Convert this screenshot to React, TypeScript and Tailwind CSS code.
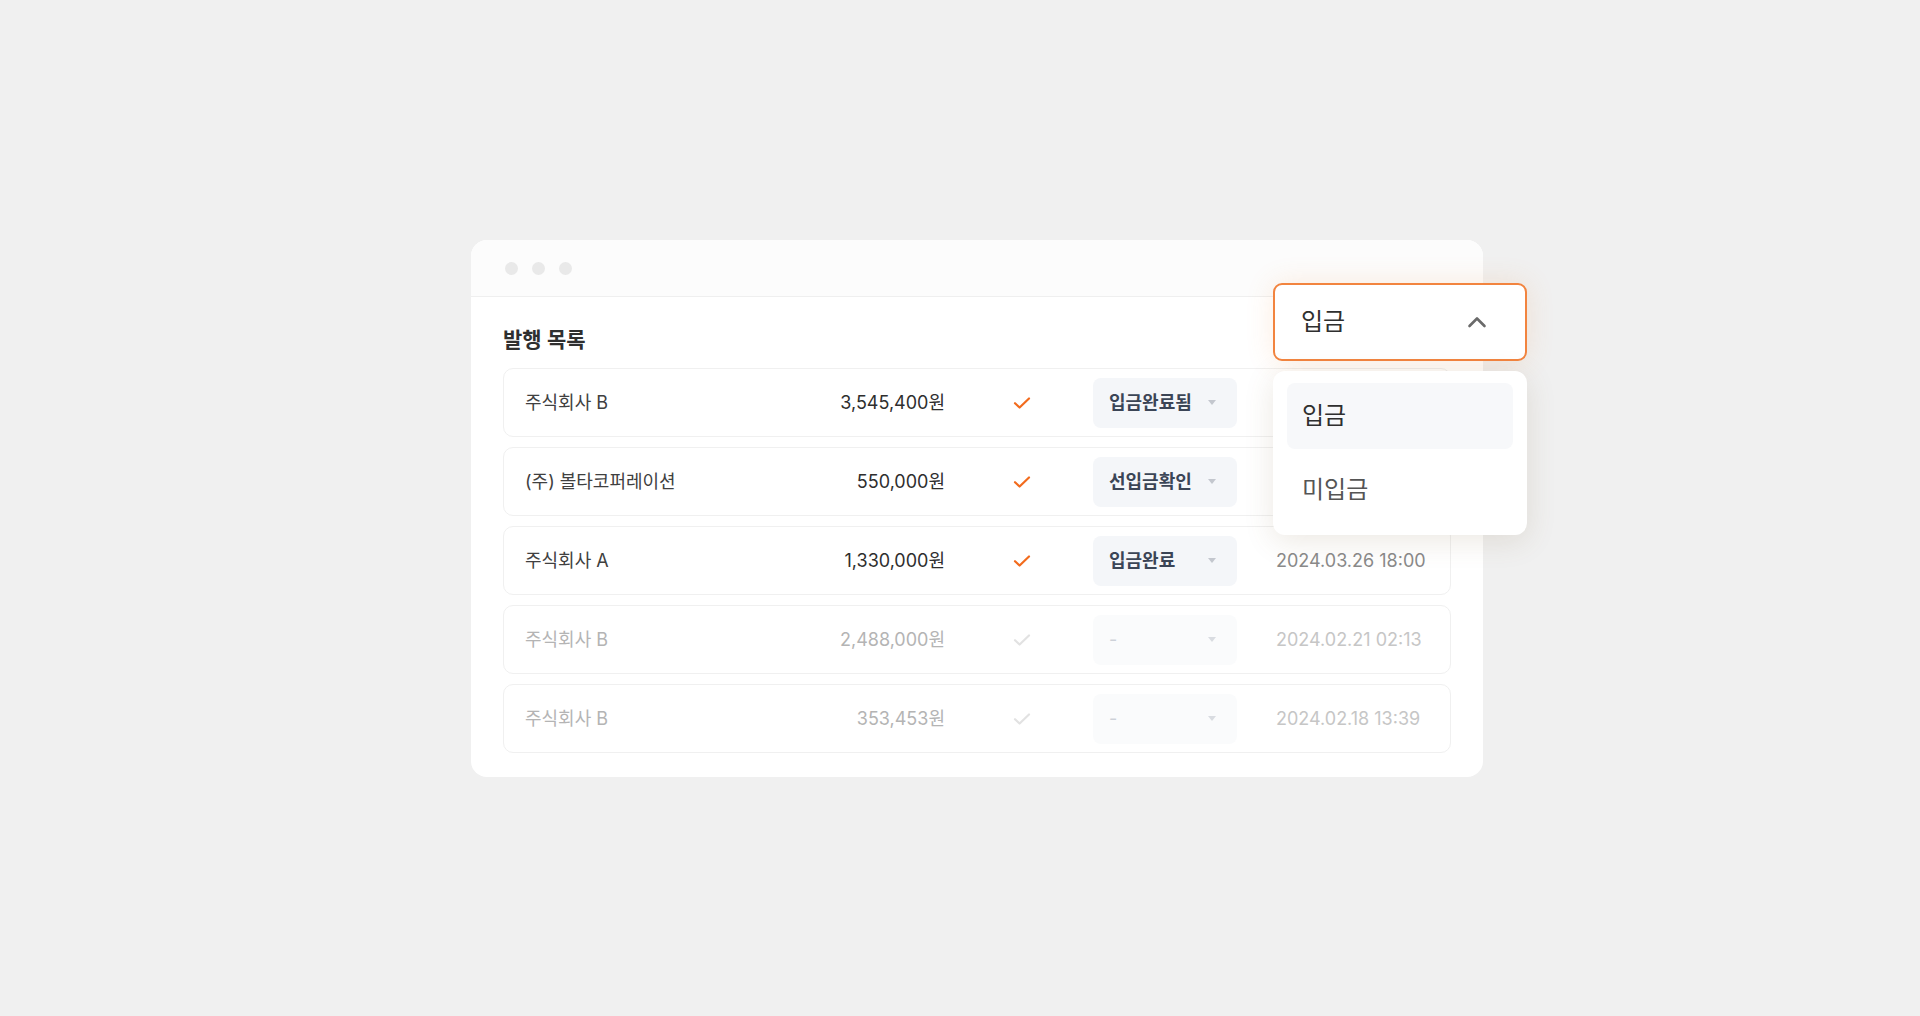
import React from "react";

type Row = {
  name: string;
  amount: string;
  status: string;
  date: string;
  active: boolean;
};

const rows: Row[] = [
  { name: "주식회사 B", amount: "3,545,400원", status: "입금완료됨", date: "2024.04.02 11:20", active: true },
  { name: "(주) 볼타코퍼레이션", amount: "550,000원", status: "선입금확인", date: "2024.03.29 09:41", active: true },
  { name: "주식회사 A", amount: "1,330,000원", status: "입금완료", date: "2024.03.26 18:00", active: true },
  { name: "주식회사 B", amount: "2,488,000원", status: "-", date: "2024.02.21 02:13", active: false },
  { name: "주식회사 B", amount: "353,453원", status: "-", date: "2024.02.18 13:39", active: false },
];

function CheckIcon({ color }: { color: string }) {
  return (
    <svg width="18" height="14" viewBox="0 0 18 14" fill="none">
      <path d="M2 7.2 L6.6 11.5 L16 2.5" stroke={color} strokeWidth="2.2" strokeLinecap="round" strokeLinejoin="round" />
    </svg>
  );
}

function Caret({ color }: { color: string }) {
  return (
    <svg width="8" height="5" viewBox="0 0 8 5">
      <path d="M0 0 L8 0 L4 5 Z" fill={color} />
    </svg>
  );
}

export default function App() {
  return (
    <div
      className="min-h-[1016px] w-full bg-[#f0f0f0] pl-[471px] pt-[240px]"
      style={{ fontFamily: 'Inter, "Noto Sans CJK KR", "Noto Sans", sans-serif' }}
    >
      <div className="relative w-[1012px] rounded-[16px] bg-white">
        {/* window header */}
        <div className="flex h-[57px] items-center gap-[14px] rounded-t-[16px] border-b border-[#efefef] bg-[#fcfcfc] pl-[34px]">
          <span className="h-[13px] w-[13px] rounded-full bg-[#e9e9e9]" />
          <span className="h-[13px] w-[13px] rounded-full bg-[#e9e9e9]" />
          <span className="h-[13px] w-[13px] rounded-full bg-[#e9e9e9]" />
        </div>

        {/* body */}
        <div className="px-[32px] pb-[24px] pt-[31px]">
          <h2 className="mb-[16px] h-[24px] text-[21px] font-semibold leading-[24px] text-[#2f2f2f]">발행 목록</h2>
          <div className="flex flex-col gap-[10px]">
            {rows.map((r, i) => (
              <div
                key={i}
                className="flex h-[69px] items-center rounded-[10px] border border-[#f0f0f0] bg-white pl-[21px]"
              >
                <div
                  className={`w-[250px] text-[18px] ${r.active ? "text-[#404040]" : "text-[#b4b4b4]"}`}
                >
                  {r.name}
                </div>
                <div
                  className={`w-[170px] text-right text-[18px] ${r.active ? "text-[#2e2e2e]" : "text-[#b4b4b4]"}`}
                >
                  {r.amount}
                </div>
                <div className="flex w-[148px] justify-center pl-[6px]">
                  <CheckIcon color={r.active ? "#f26b1d" : "#e2e2e2"} />
                </div>
                <div
                  className={`flex h-[50px] w-[144px] items-center justify-between rounded-[8px] pl-[16px] pr-[21px] ${r.active ? "bg-[#f4f6f9]" : "bg-[#fafbfc]"}`}
                >
                  <span
                    className={`text-[18px] ${r.active ? "font-semibold text-[#3b4556]" : "font-normal text-[#cdd1d8]"}`}
                  >
                    {r.status}
                  </span>
                  <Caret color={r.active ? "#c3c7ce" : "#d9dce1"} />
                </div>
                <div className={`ml-[39px] text-[18px] ${r.active ? "text-[#8a8a8a]" : "text-[#c6c6c6]"}`}>
                  {r.date}
                </div>
              </div>
            ))}
          </div>
        </div>

        {/* dropdown overlay */}
        <div className="absolute left-[802px] top-[43px] w-[254px]">
          <div className="flex h-[78px] items-center justify-between rounded-[9px] border-2 border-[#f2843f] bg-white pl-[26px] pr-[38px] shadow-[0_0_28px_rgba(240,140,60,0.16)]">
            <span className="text-[24px] text-[#2f2f2f]">입금</span>
            <svg width="20" height="12" viewBox="0 0 20 12" fill="none">
              <path d="M2.5 10 L10 2.5 L17.5 10" stroke="#6a6a6a" strokeWidth="2.6" strokeLinecap="round" strokeLinejoin="round" />
            </svg>
          </div>
          <div className="mt-[10px] flex h-[164px] flex-col gap-[8px] rounded-[12px] bg-white px-[14px] py-[12px] shadow-[0_6px_30px_rgba(120,90,50,0.14)]">
            <div className="flex h-[66px] items-center rounded-[8px] bg-[#f7f8fa] pl-[15px] text-[24px] text-[#2f2f2f]">
              입금
            </div>
            <div className="flex h-[66px] items-center pl-[15px] text-[24px] text-[#555555]">미입금</div>
          </div>
        </div>
      </div>
    </div>
  );
}
